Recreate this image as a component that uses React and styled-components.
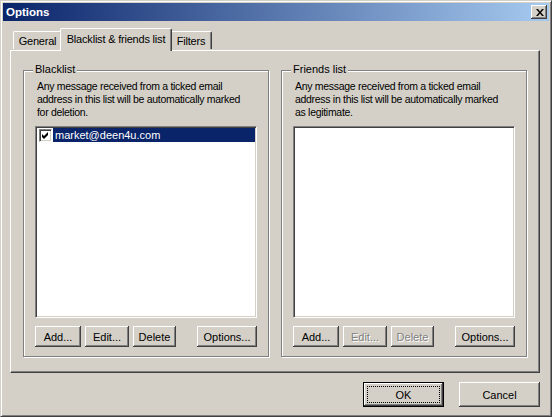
import React from "react";
import styled, { createGlobalStyle } from "styled-components";

const GlobalStyle = createGlobalStyle`
  html, body {
    margin: 0;
    padding: 0;
    background: #d4d0c8;
  }
`;

const blacklist = [{ email: "market@deen4u.com", checked: true, selected: true }];

const descLines = (last) => [
  "Any message received from a ticked email",
  "address in this list will be automatically marked",
  last,
];

function App() {
  return (
    <>
      <GlobalStyle />
      <Window>
        <TitleBar>
          <Title>Options</Title>
          <CloseButton aria-label="Close">
            <svg width="8" height="7" viewBox="0 0 8 7">
              <path d="M0 0h2l2 2.4L6 0h2L5 3.5 8 7H6L4 4.6 2 7H0l3-3.5z" fill="#000" />
            </svg>
          </CloseButton>
        </TitleBar>

        <Body>
          <TabRow>
            <Tab $w={49}>General</Tab>
            <Tab $w={112} $active>Blacklist &amp; friends list</Tab>
            <Tab $w={42}>Filters</Tab>
          </TabRow>

          <Panel>
            <GroupBox>
              <Legend>Blacklist</Legend>
              <Desc>
                {descLines("for deletion.").map((l) => (
                  <DescLine key={l}>{l}</DescLine>
                ))}
              </Desc>
              <ListBox>
                {blacklist.map((item) => (
                  <ListRow key={item.email}>
                    <CheckBox>
                      {item.checked && (
                        <svg width="7" height="7" viewBox="0 0 7 7">
                          <path d="M0 2l2 2 4-4v3L2 7 0 5z" fill="#000" />
                        </svg>
                      )}
                    </CheckBox>
                    <ItemLabel $selected={item.selected}>{item.email}</ItemLabel>
                  </ListRow>
                ))}
              </ListBox>
              <ButtonRow>
                <Button $w={46}>Add...</Button>
                <Button $w={44}>Edit...</Button>
                <Button $w={43}>Delete</Button>
                <Spacer />
                <Button $w={60}>Options...</Button>
              </ButtonRow>
            </GroupBox>

            <GroupBox>
              <Legend>Friends list</Legend>
              <Desc>
                {descLines("as legitimate.").map((l) => (
                  <DescLine key={l}>{l}</DescLine>
                ))}
              </Desc>
              <ListBox />
              <ButtonRow>
                <Button $w={46}>Add...</Button>
                <Button $w={44} disabled>Edit...</Button>
                <Button $w={43} disabled>Delete</Button>
                <Spacer />
                <Button $w={60}>Options...</Button>
              </ButtonRow>
            </GroupBox>
          </Panel>

          <Footer>
            <Button $w={81} $h={25} $default>OK</Button>
            <Button $w={81} $h={25}>Cancel</Button>
          </Footer>
        </Body>
      </Window>
    </>
  );
}

export default App;

// styled-components
const Window = styled.div`
  width: 552px;
  height: 417px;
  box-sizing: border-box;
  background: #d4d0c8;
  border: 1px solid;
  border-color: #d4d0c8 #404040 #404040 #d4d0c8;
  box-shadow: inset 1px 1px #fff, inset -1px -1px #808080;
  padding: 2px;
  display: flex;
  flex-direction: column;
  font: 11px "Liberation Sans", Arial, sans-serif;
  color: #000;
`;

const TitleBar = styled.div`
  height: 18px;
  display: flex;
  align-items: center;
  padding: 0 2px 0 3px;
  background: linear-gradient(to right, #0a246a, #a6caf0);
`;

const Title = styled.span`
  flex: 1;
  color: #fff;
  font-weight: bold;
  font-size: 11.5px;
`;

const CloseButton = styled.div`
  width: 16px;
  height: 14px;
  box-sizing: border-box;
  background: #d4d0c8;
  display: flex;
  align-items: center;
  justify-content: center;
  padding-left: 1px;
  box-shadow: inset -1px -1px #404040, inset 1px 1px #fff,
    inset -2px -2px #808080, inset 2px 2px #d4d0c8;
`;

const Body = styled.div`
  flex: 1;
  display: flex;
  flex-direction: column;
  padding: 0 9px 0 7px;
`;

const TabRow = styled.div`
  display: flex;
  align-items: flex-end;
  height: 23px;
  margin-top: 7px;
  margin-bottom: -1px;
  padding-left: 3px;
  position: relative;
  z-index: 1;
`;

const Tab = styled.div`
  width: ${(p) => p.$w}px;
  box-sizing: border-box;
  height: ${(p) => (p.$active ? 23 : 18)}px;
  margin: ${(p) => (p.$active ? "0 -2px" : "0 0 2px 0")};
  padding-bottom: ${(p) => (p.$active ? 3 : 0)}px;
  position: relative;
  z-index: ${(p) => (p.$active ? 2 : 1)};
  display: flex;
  align-items: center;
  justify-content: center;
  white-space: nowrap;
  letter-spacing: -0.2px;
  background: #d4d0c8;
  border-top: 1px solid #fff;
  border-left: 1px solid #fff;
  border-right: 1px solid #404040;
  border-radius: 2px 2px 0 0;
  box-shadow: inset -1px 0 #808080;
`;

const Panel = styled.div`
  height: 323px;
  box-sizing: border-box;
  border: 1px solid;
  border-color: #fff #404040 #404040 #fff;
  box-shadow: inset -1px -1px #808080;
  padding: 19px 12px 15px 12px;
  display: grid;
  grid-template-columns: 1fr 1fr;
  gap: 12px;
`;

const GroupBox = styled.div`
  position: relative;
  border: 1px solid #808080;
  box-shadow: 1px 1px 0 #fff, inset 1px 1px 0 #fff;
  padding: 9px 11px 9px 11px;
  display: flex;
  flex-direction: column;
`;

const Legend = styled.span`
  position: absolute;
  top: -8px;
  left: 9px;
  padding: 0 2px;
  line-height: 13px;
  background: #d4d0c8;
`;

const Desc = styled.div`
  margin: 0 0 7px;
  padding-left: 2px;
  height: 39px;
  font-size: 10.5px;
  letter-spacing: -0.3px;
`;

const DescLine = styled.div`
  line-height: 13px;
  white-space: nowrap;
`;

const ListBox = styled.div`
  flex: 1;
  background: #fff;
  border: 1px solid;
  border-color: #808080 #fff #fff #808080;
  box-shadow: inset 1px 1px #404040, inset -1px -1px #d4d0c8;
  padding: 1px;
`;

const ListRow = styled.div`
  display: flex;
  align-items: center;
  height: 14px;
  padding-left: 2px;
`;

const CheckBox = styled.span`
  width: 13px;
  height: 13px;
  box-sizing: border-box;
  background: #fff;
  border: 1px solid;
  border-color: #808080 #fff #fff #808080;
  box-shadow: inset 1px 1px #404040, inset -1px -1px #d4d0c8;
  display: flex;
  align-items: center;
  justify-content: center;
`;

const ItemLabel = styled.span`
  flex: 1;
  margin-left: 1px;
  padding-left: 2px;
  line-height: 14px;
  background: ${(p) => (p.$selected ? "#0a246a" : "transparent")};
  color: ${(p) => (p.$selected ? "#fff" : "#000")};
`;

const ButtonRow = styled.div`
  display: flex;
  gap: 4px;
  margin-top: 8px;
`;

const Spacer = styled.div`
  flex: 1;
`;

const Button = styled.button`
  position: relative;
  width: ${(p) => p.$w}px;
  height: ${(p) => p.$h || 21}px;
  padding: 0;
  background: #d4d0c8;
  border: ${(p) => (p.$default ? "1px solid #000" : "none")};
  box-sizing: border-box;
  font: 11px "Liberation Sans", Arial, sans-serif;
  color: #000;
  box-shadow: inset -1px -1px #404040, inset 1px 1px #fff,
    inset -2px -2px #808080, inset 2px 2px #d4d0c8;

  &:disabled {
    color: #808080;
    text-shadow: 1px 1px #fff;
  }

  ${(p) =>
    p.$default &&
    `
    &::after {
      content: "";
      position: absolute;
      inset: 3px;
      border: 1px dotted #000;
    }
  `}
`;

const Footer = styled.div`
  display: flex;
  justify-content: flex-end;
  gap: 15px;
  margin-top: 9px;
`;
